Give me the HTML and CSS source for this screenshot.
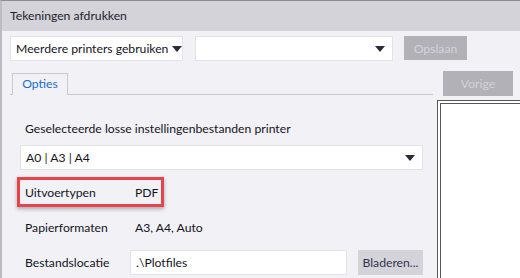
FILE: index.html
```html
<!DOCTYPE html>
<html lang="nl">
<head>
    <meta charset="UTF-8">
    <meta name="viewport" content="width=device-width, initial-scale=1.0">
    <title>Tekeningen afdrukken</title>
    <link rel="stylesheet" href="styles.css">
</head>
<body>
    <div class="window">
        <div class="titlebar">Tekeningen afdrukken</div>

        <div class="toolbar">
            <div class="select select-printers">
                <span>Meerdere printers gebruiken</span>
                <svg class="arrow" width="10" height="6" viewBox="0 0 10 6"><path d="M0 0H10L5 6Z"/></svg>
            </div>
            <div class="select select-preset">
                <span></span>
                <svg class="arrow" width="10" height="6" viewBox="0 0 10 6"><path d="M0 0H10L5 6Z"/></svg>
            </div>
            <button class="btn btn-disabled btn-save" disabled>Opslaan</button>
        </div>

        <div class="main">
            <div class="left-pane">
                <div class="tabs">
                    <div class="tab active">Opties</div>
                </div>

                <div class="options">
                    <div class="field-label">Geselecteerde losse instellingenbestanden printer</div>
                    <div class="select select-files">
                        <span>A0 | A3 | A4</span>
                        <svg class="arrow" width="10" height="6" viewBox="0 0 10 6"><path d="M0 0H10L5 6Z"/></svg>
                    </div>

                    <div class="row highlighted">
                        <span class="row-label">Uitvoertypen</span>
                        <span class="row-value">PDF</span>
                    </div>
                    <div class="row">
                        <span class="row-label">Papierformaten</span>
                        <span class="row-value">A3, A4, Auto</span>
                    </div>
                    <div class="row">
                        <span class="row-label">Bestandslocatie</span>
                        <div class="text-input">.\Plotfiles</div>
                        <button class="btn btn-browse">Bladeren...</button>
                    </div>
                </div>
            </div>

            <div class="right-pane">
                <button class="btn btn-disabled btn-prev" disabled>Vorige</button>
                <div class="preview">
                    <div class="preview-page"></div>
                </div>
            </div>
        </div>
    </div>
</body>
</html>
```

FILE: styles.css
```css
html, body {
    margin: 0;
    padding: 0;
}
body {
    width: 520px;
    height: 278px;
    overflow: hidden;
    font-family: Lato, "Noto Sans", sans-serif;
    font-size: 12.2px;
    color: #15151e;
    background-color: #f1f1f6;
}
.window {
    height: 278px;
    overflow: hidden;
    border-top: 1px solid #8c8c92;
    border-left: 2px solid #bcbcc2;
    box-sizing: border-box;
    background-color: #f1f1f6;
}
.titlebar {
    height: 30px;
    line-height: 29px;
    padding-left: 8px;
    background-color: #d3d3d9;
    color: #22222e;
}
.toolbar {
    display: flex;
    align-items: flex-start;
    padding: 5px 0 0 8px;
    height: 30px;
    box-sizing: border-box;
}
.select {
    display: flex;
    align-items: center;
    justify-content: space-between;
    height: 25px;
    box-sizing: border-box;
    padding: 0 7px 0 5px;
    background-color: #fff;
    border: 1px solid #e2e2e8;
    white-space: nowrap;
}
.select .arrow {
    flex: none;
    fill: #2a2a38;
    margin-left: 4px;
}
.select-printers {
    width: 173px;
}
.select-preset {
    width: 198px;
    margin-left: 12px;
}
.btn {
    height: 24px;
    border: none;
    padding: 0;
    font-family: inherit;
    font-size: inherit;
    cursor: pointer;
}
.btn-disabled {
    background-color: #b1b1b7;
    color: #d3d3d9;
    cursor: not-allowed;
}
.btn-save {
    width: 63px;
    margin-left: 11px;
}
.main {
    display: flex;
    margin-top: 10px;
}
.left-pane {
    width: 423px;
    margin-left: 8px;
}
.tabs {
    height: 24px;
    border-bottom: 1px solid #c9c9cf;
    padding: 2px 0 0 2px;
    box-sizing: border-box;
    display: flex;
}
.tab {
    width: 56px;
    height: 22px;
    box-sizing: border-box;
    border: 1px solid #c9c9cf;
    border-bottom: none;
    text-align: center;
    line-height: 20px;
    color: #1b6fca;
    background-color: #f1f1f6;
}
.options {
    padding: 25px 0 0 10px;
}
.field-label {
    padding-left: 5px;
    height: 17px;
    line-height: 17px;
}
.select-files {
    width: 403px;
    margin-top: 8px;
}
.row {
    position: relative;
    display: flex;
    align-items: center;
    height: 35px;
    padding-left: 5px;
}
.select-files + .row {
    margin-top: 5px;
}
.row-label {
    width: 110px;
    flex: none;
}
.highlighted::before {
    content: "";
    position: absolute;
    left: -3px;
    top: 2px;
    width: 147px;
    height: 30px;
    box-sizing: border-box;
    border: 3px solid #e8434b;
    box-shadow: 0 2px 4px rgba(0, 0, 0, 0.3);
}
.text-input {
    flex: none;
    width: 217px;
    height: 25px;
    box-sizing: border-box;
    border: 1px solid #e2e2e8;
    background-color: #fff;
    line-height: 23px;
    padding-left: 5px;
    margin-left: -5px;
}
.btn-browse {
    flex: none;
    width: 65px;
    height: 25px;
    margin-left: 11px;
    background-color: #d3d3d9;
    color: #33334a;
}
.right-pane {
    margin-left: 4px;
    flex: 1;
}
.btn-prev {
    display: block;
    width: 70px;
    height: 25px;
    margin-left: 6px;
}
.preview {
    margin-top: 4px;
    height: 200px;
    border: 1px solid #56565c;
    border-right: none;
    padding: 2px 0 0 2px;
    background-color: #fff;
}
.preview-page {
    height: 100%;
    border: 1px solid #56565c;
    border-right: none;
    background-color: #fff;
}
```
